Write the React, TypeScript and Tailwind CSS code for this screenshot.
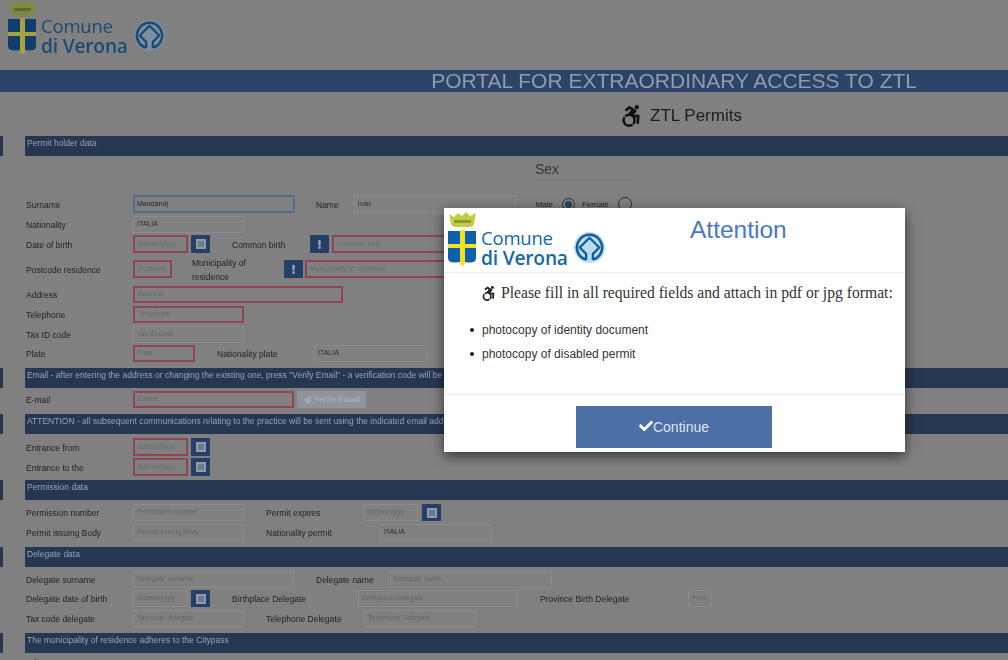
import React from "react";
import { FaAccessibleIcon, FaCheck, FaExclamation, FaPaperPlane } from "react-icons/fa";

function Logo({ dim }: { dim?: boolean }) {
  const shield = dim ? "#123e6e" : "#0e5fae";
  const cross = dim ? "#a8a23c" : "#f5e11e";
  const crown = dim ? "#7d8a3c" : "#c2cf44";
  const ink = dim ? "text-[#1d4a73]" : "text-[#1568ac]";
  const ring = dim ? "#1b4a73" : "#0f5f9c";
  const halo = dim ? "#7b8f9f" : "#bcdcf0";
  return (
    <div className="flex items-start">
      <svg width="29" height="55" viewBox="0 0 29 55" className="shrink-0">
        <path d="M1 2l5 3 4-4 4 3 4-4 4 4 6-3-2 11q-1 3-5 3h-13q-4 0-5-3z" fill={crown} />
        <path d="M6 8h17v3H6z" fill={dim ? "#5d6a30" : "#8d9a34"} />
        <path d="M0 19h12v13H0zM17 19h11v13H17zM0 36h12v14q-12 2-12-4zM17 36h11v10q0 6-11 4z" fill={shield} />
        <path d="M12 18h5v14h11v4H17v16l-2.5 2-2.500-2V36H0v-4h12z" fill={cross} />
      </svg>
      <div className={`ml-[4px] mt-[16px] font-['Open_Sans',sans-serif] text-[18.500px] leading-[20px] ${ink}`}>
        <div className="tracking-[-0.2px]">Comune</div>
        <div className="text-[19.200px] font-semibold tracking-[-0.2px]">di Verona</div>
      </div>
      <svg width="33" height="33" viewBox="0 0 34 34" className="ml-[5px] mt-[19px] shrink-0">
        <circle cx="17" cy="17" r="16" fill={halo} />
        <path d="M13.500 29.500A13 13 0 1 1 20.500 29.500" fill="none" stroke={ring} strokeWidth="2.600" />
        <path d="M13.500 30v-6.500L7 17l10-10 10 10-6.500 6.500V30" fill="none" stroke={ring} strokeWidth="2.400" strokeLinejoin="round" />
      </svg>
    </div>
  );
}

function Bar({ text, className }: { text?: string; className?: string }) {
  return (
    <div className={`flex h-[20px] ${className ?? ""}`}>
      <div className="h-full w-[3px] bg-[#263752]" />
      <div className="ml-[22px] flex-1 overflow-hidden whitespace-nowrap bg-[#263752] pl-[2px] pt-[2px] text-[8.500px] leading-[11px] text-[#98a3b5]">
        {text}
      </div>
    </div>
  );
}

function Label({ children, className }: { children: React.ReactNode; className?: string }) {
  return <div className={`shrink-0 whitespace-nowrap pt-[1px] text-[8.500px] leading-[12px] text-[#222222] ${className ?? ""}`}>{children}</div>;
}

function Field({ text, value, red, className }: { text?: string; value?: boolean; red?: boolean; className?: string }) {
  const tone = value
    ? "border border-[#8c8c8c] text-[#2c2c2c]"
    : red
      ? "border-2 border-[#8e4653] text-[#5f6f66]"
      : "border border-[#8c8c8c] text-[#666666]";
  return (
    <div className={`flex h-full shrink-0 items-center overflow-hidden whitespace-nowrap pl-[3px] text-[7px] ${tone} ${className ?? ""}`}>
      {text}
    </div>
  );
}

function Square({ kind, className }: { kind: "cal" | "bang"; className?: string }) {
  return (
    <div className={`flex h-full w-[19px] shrink-0 items-center justify-center bg-[#263f66] ${className ?? ""}`}>
      {kind === "cal" ? (
        <div className="h-[10px] w-[10px] border-2 border-[#8f99a8] bg-[#6f7c90]" />
      ) : (
        <FaExclamation size={9} className="text-[#a0a8b5]" />
      )}
    </div>
  );
}

function Row({ label, className, children }: { label: React.ReactNode; className?: string; children?: React.ReactNode }) {
  return (
    <div className={`flex items-center pl-[26px] ${className ?? ""}`}>
      <Label className="w-[107px]">{label}</Label>
      {children}
    </div>
  );
}

export default function App() {
  return (
    <div className="relative h-[660px] w-[1008px] overflow-hidden bg-[#808080] font-['Liberation_Sans',Arial,sans-serif]">
      <div className="blur-[0.5px]">
        <header className="h-[70px] pl-[8px]">
          <Logo dim />
        </header>
        <div className="flex h-[22px] items-center justify-end bg-[#2c4468] pr-[91px] text-[21px] text-[#8f9cb0]">
          PORTAL FOR EXTRAORDINARY ACCESS TO ZTL
        </div>
        <div className="flex h-[44px] items-center pl-[620px] pt-[3px] text-[17px] text-[#1c1c1c]">
          <FaAccessibleIcon size={22} className="mr-[8px] text-[#111111]" />
          ZTL Permits
        </div>
        <Bar text="Permit holder data" />
        <div className="ml-[535px] h-[39px] w-[97px] pt-[4px]">
          <div className="h-[21px] border-b border-[#767676] text-[14px] leading-[18px] text-[#353535]">Sex</div>
        </div>

        <Row label="Surname" className="h-[18px]">
          <div className="flex h-full w-[162px] shrink-0 items-center border-2 border-[#566c8e] pl-[2px] text-[7px] text-[#1c1c1c]">Mandarol|</div>
          <Label className="ml-[21px]">Name</Label>
          <Field value text="Ivan" className="ml-[15px] w-[162px]" />
          <Label className="ml-[20px] text-[8px]">Male</Label>
          <div className="ml-[9px] flex h-[13px] w-[13px] items-center justify-center rounded-full border border-[#2a2a2a]">
            <div className="h-[7px] w-[7px] rounded-full bg-[#2b4164]" />
          </div>
          <Label className="ml-[7px] text-[8px]">Female</Label>
          <div className="ml-[9px] h-[14px] w-[14px] rounded-full border border-[#2a2a2a]" />
        </Row>
        <Row label="Nationality" className="mt-[3px] h-[17px]">
          <Field value text="ITALIA" className="w-[111px]" />
        </Row>
        <Row label="Date of birth" className="mt-[2px] h-[18px]">
          <Field red text="dd/mm/yyyy" className="w-[55px]" />
          <Square kind="cal" className="ml-[3px]" />
          <Label className="ml-[22px]">Common birth</Label>
          <Square kind="bang" className="ml-[25px] w-[17px]" />
          <Field red text="Common birth" className="ml-[3px] w-[130px]" />
        </Row>
        <Row label="Postcode residence" className="mt-[7px] h-[18px]">
          <Field red text="Postcode" className="w-[39px]" />
          <Label className="ml-[20px] w-[92px] leading-[14px]">
            Municipality of
            <br />
            residence
          </Label>
          <Square kind="bang" className="w-[18px]" />
          <Field red text="Municipality of residence" className="ml-[2px] w-[150px]" />
        </Row>
        <Row label="Address" className="mt-[8px] h-[17px]">
          <Field red text="Address" className="w-[210px]" />
        </Row>
        <Row label="Telephone" className="mt-[3px] h-[17px]">
          <Field red text="Telephone" className="w-[111px]" />
        </Row>
        <Row label="Tax ID code" className="mt-[3px] h-[17px]">
          <Field text="Tax ID code" className="w-[111px]" />
        </Row>
        <Row label="Plate" className="mt-[2px] h-[17px]">
          <Field red text="Plate" className="w-[62px]" />
          <Label className="ml-[22px] w-[97px]">Nationality plate</Label>
          <Field value text="ITALIA" className="w-[113px]" />
        </Row>
        <Bar className="mt-[6px]" text={'Email - after entering the address or changing the existing one, press "Verify Email" - a verification code will be sent to the address'} />
        <Row label="E-mail" className="mt-[3px] h-[17px]">
          <Field red text="E-mail" className="w-[161px]" />
          <div className="ml-[3px] flex h-full w-[69px] items-center justify-center gap-[3px] bg-[#8e939c] font-['Liberation_Serif',serif] text-[8.500px] font-bold text-[#a9adb4]">
            <FaPaperPlane size={8} />
            Verify Email
          </div>
        </Row>
        <Bar className="mt-[6px]" text="ATTENTION - all subsequent communications relating to the practice will be sent using the indicated email address" />
        <Row label="Entrance from" className="mt-[4px] h-[18px]">
          <Field red text="dd/mm/yyyy" className="w-[55px]" />
          <Square kind="cal" className="ml-[3px]" />
        </Row>
        <Row label="Entrance to the" className="mt-[2px] h-[18px]">
          <Field red text="dd/mm/yyyy" className="w-[55px]" />
          <Square kind="cal" className="ml-[3px]" />
        </Row>
        <Bar className="mt-[4px]" text="Permission data" />
        <Row label="Permission number" className="mt-[4px] h-[17px]">
          <Field text="Permission number" className="w-[111px]" />
          <Label className="ml-[22px] w-[97px]">Permit expires</Label>
          <Field text="dd/mm/yyyy" className="w-[55px]" />
          <Square kind="cal" className="ml-[4px]" />
        </Row>
        <Row label="Permit issuing Body" className="mt-[3px] h-[17px]">
          <Field text="Permit issuing Body" className="w-[111px]" />
          <Label className="ml-[22px] w-[114px]">Nationality permit</Label>
          <Field value text="ITALIA" className="w-[112px]" />
        </Row>
        <Bar className="mt-[6px]" text="Delegate data" />
        <Row label="Delegate surname" className="mt-[4px] h-[17px]">
          <Field text="Delegate surname" className="w-[161px]" />
          <Label className="ml-[22px] w-[74px]">Delegate name</Label>
          <Field text="Delegate name" className="w-[162px]" />
        </Row>
        <Row label="Delegate date of birth" className="mt-[2px] h-[17px]">
          <Field text="dd/mm/yyyy" className="w-[55px]" />
          <Square kind="cal" className="ml-[3px]" />
          <Label className="ml-[22px] w-[126px]">Birthplace Delegate</Label>
          <Field text="Birthplace Delegate" className="w-[160px]" />
          <Label className="ml-[22px] w-[148px]">Province Birth Delegate</Label>
          <Field text="Prov" className="w-[24px]" />
        </Row>
        <Row label="Tax code delegate" className="mt-[3px] h-[17px]">
          <Field text="Tax code delegate" className="w-[111px]" />
          <Label className="ml-[22px] w-[98px]">Telephone Delegate</Label>
          <Field text="Telephone Delegate" className="w-[112px]" />
        </Row>
        <Bar className="mt-[6px]" text="The municipality of residence adheres to the Citypass" />
        <div className="mt-[4px] pl-[28px] text-[8.500px] leading-[12px] text-[#222222]">Citypass</div>
      </div>

      <div className="absolute left-[444px] top-[208px] h-[244px] w-[461px] bg-white shadow-[0_4px_12px_rgba(0,0,0,0.6)]">
        <div className="relative h-[65px] border-b border-[#eeeeee] pl-[4px] pt-[4px]">
          <Logo />
          <div className="absolute left-[246px] top-[7px] text-[24.500px] leading-[30px] text-[#4a78c4]">Attention</div>
        </div>
        <div className="h-[122px] border-b border-[#eeeeee]">
          <div className="flex items-center whitespace-nowrap pl-[37px] pt-[10px] font-['Liberation_Serif',serif] text-[15.650px] leading-[20px] text-[#333333]">
            <FaAccessibleIcon size={15} className="mr-[5px] text-[#222222]" />
            Please fill in all required fields and attach in pdf or jpg format:
          </div>
          <ul className="ml-[38px] mt-[20px] text-[12px] leading-[14px] text-[#333333]">
            <li className="relative before:absolute before:left-[-12px] before:top-[5px] before:h-[4px] before:w-[4px] before:rounded-full before:bg-[#222222]">photocopy of identity document</li>
            <li className="relative mt-[10px] before:absolute before:left-[-12px] before:top-[5px] before:h-[4px] before:w-[4px] before:rounded-full before:bg-[#222222]">photocopy of disabled permit</li>
          </ul>
        </div>
        <div className="flex pl-[132px] pt-[11px]">
          <div className="flex h-[42px] w-[196px] items-center justify-center bg-[#4b6ea5] text-[14px] text-[#dfe5ee]">
            <FaCheck size={14} className="mb-[3px] text-white" />
            Continue
          </div>
        </div>
      </div>
    </div>
  );
}
